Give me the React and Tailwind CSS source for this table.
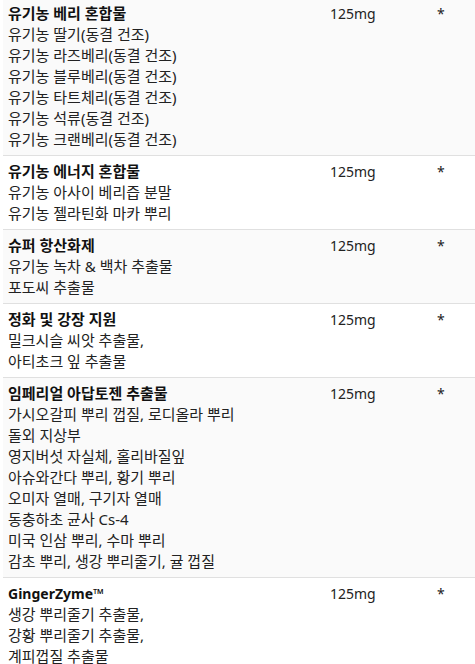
import React from 'react';

const rows = [
  {
    title: '유기농 베리 혼합물',
    items: [
      '유기농 딸기(동결 건조)',
      '유기농 라즈베리(동결 건조)',
      '유기농 블루베리(동결 건조)',
      '유기농 타트체리(동결 건조)',
      '유기농 석류(동결 건조)',
      '유기농 크랜베리(동결 건조)',
    ],
  },
  {
    title: '유기농 에너지 혼합물',
    items: ['유기농 아사이 베리즙 분말', '유기농 젤라틴화 마카 뿌리'],
  },
  {
    title: '슈퍼 항산화제',
    items: ['유기농 녹차 & 백차 추출물', '포도씨 추출물'],
  },
  {
    title: '정화 및 강장 지원',
    items: ['밀크시슬 씨앗 추출물,', '아티초크 잎 추출물'],
  },
  {
    title: '임페리얼 아답토젠 추출물',
    items: [
      '가시오갈피 뿌리 껍질, 로디올라 뿌리',
      '돌외 지상부',
      '영지버섯 자실체, 홀리바질잎',
      '아슈와간다 뿌리, 황기 뿌리',
      '오미자 열매, 구기자 열매',
      '동충하초 균사 Cs-4',
      '미국 인삼 뿌리, 수마 뿌리',
      '감초 뿌리, 생강 뿌리줄기, 귤 껍질',
    ],
  },
  {
    title: 'GingerZyme™',
    latin: true,
    items: ['생강 뿌리줄기 추출물,', '강황 뿌리줄기 추출물,', '계피껍질 추출물'],
  },
];

const App = () => {
  return (
    <div
      className="ml-[3px] -mt-[2px] text-[14px] leading-[21px] text-[#222]"
      style={{ fontFamily: '"Noto Sans", "Noto Sans CJK KR", sans-serif' }}
    >
      {rows.map((row, i) => (
        <div
          key={i}
          className={`grid grid-cols-[322px_107px_1fr] border-b border-[#e0e0e0] ${i % 2 === 0 ? 'bg-[#fafafa]' : 'bg-white'}`}
        >
          <div className="px-[5px] py-[5px] text-[15px]">
            <div className={`font-bold text-[#111] ${row.latin ? 'text-[14px]' : ''}`}>{row.title}</div>
            {row.items.map((item, j) => (
              <div key={j}>{item}</div>
            ))}
          </div>
          <div className="px-[5px] py-[5px]">125mg</div>
          <div className="px-[5px] py-[5px]">*</div>
        </div>
      ))}
    </div>
  );
};

export default App;
